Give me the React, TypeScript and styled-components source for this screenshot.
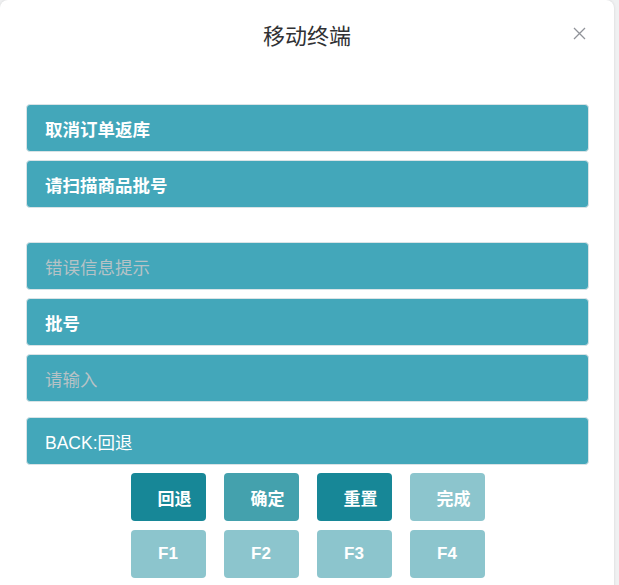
import React from 'react';
import styled, { createGlobalStyle } from 'styled-components';

const GlobalStyle = createGlobalStyle`
  html, body {
    margin: 0;
    padding: 0;
    background-color: #f0f1f2;
    font-family: "Liberation Sans", "Noto Sans CJK SC", sans-serif;
  }
`;

const Page = styled.div`
  width: 619px;
  height: 585px;
  overflow: hidden;
`;

const Dialog = styled.div`
  width: 614px;
  min-height: 600px;
  background-color: #ffffff;
  border-radius: 8px;
  box-shadow: 0 0 3px rgba(0, 0, 0, 0.12);
  display: flex;
  flex-direction: column;
`;

const Header = styled.div`
  position: relative;
  height: 74px;
  display: flex;
  justify-content: center;
  padding-top: 20px;
  box-sizing: border-box;
`;

const Title = styled.h2`
  margin: 0;
  font-size: 22px;
  line-height: 34px;
  font-weight: 400;
  color: #303133;
`;

const CloseButton = styled.button`
  position: absolute;
  top: 24px;
  right: 26px;
  width: 18px;
  height: 18px;
  padding: 0;
  border: none;
  background: transparent;
  display: flex;
  align-items: center;
  justify-content: center;
  cursor: pointer;
`;

const Body = styled.div`
  padding: 30px 25px 0 26px;
  display: flex;
  flex-direction: column;
`;

const Group = styled.div<{ $gap?: number }>`
  display: flex;
  flex-direction: column;
  gap: 8px;
  margin-top: ${props => props.$gap ?? 0}px;
`;

const Row = styled.div<{ $muted?: boolean; $light?: boolean }>`
  height: 48px;
  box-sizing: border-box;
  border: 1px solid #d9e3e6;
  border-radius: 4px;
  background-color: #43a7ba;
  display: flex;
  align-items: center;
  padding-left: 18px;
  font-size: 17.5px;
  font-weight: ${props => (props.$muted || props.$light ? 400 : 700)};
  color: ${props => (props.$muted ? '#b6c2c6' : '#ffffff')};
`;

const ButtonGrid = styled.div`
  margin-top: 8px;
  align-self: center;
  display: grid;
  grid-template-columns: repeat(4, 75px);
  column-gap: 18px;
  row-gap: 9px;
`;

const KeyButton = styled.button<{ $tone: 'dark' | 'mid' | 'light'; $centered?: boolean }>`
  height: 48px;
  border: none;
  border-radius: 4px;
  background-color: ${props =>
    props.$tone === 'dark' ? '#178797' : props.$tone === 'mid' ? '#44a1ad' : '#8cc5cd'};
  color: #ffffff;
  font-family: "Liberation Sans", "Noto Sans CJK SC", sans-serif;
  font-size: 17px;
  font-weight: 700;
  text-align: ${props => (props.$centered ? 'center' : 'left')};
  padding: 0 0 0 ${props => (props.$centered ? 0 : 27)}px;
  cursor: pointer;
`;

const actions: { label: string; tone: 'dark' | 'mid' | 'light' }[] = [
  { label: '回退', tone: 'dark' },
  { label: '确定', tone: 'mid' },
  { label: '重置', tone: 'dark' },
  { label: '完成', tone: 'light' },
];

const fkeys = ['F1', 'F2', 'F3', 'F4'];

const App: React.FC = () => {
  return (
    <>
      <GlobalStyle />
      <Page>
        <Dialog>
          <Header>
            <Title>移动终端</Title>
            <CloseButton aria-label="close">
              <svg width="13" height="13" viewBox="0 0 13 13">
                <path d="M1 1 L12 12 M12 1 L1 12" stroke="#909399" strokeWidth="1.3" fill="none" />
              </svg>
            </CloseButton>
          </Header>
          <Body>
            <Group>
              <Row>取消订单返库</Row>
              <Row>请扫描商品批号</Row>
            </Group>
            <Group $gap={34}>
              <Row $muted>错误信息提示</Row>
              <Row>批号</Row>
              <Row $muted>请输入</Row>
            </Group>
            <Group $gap={15}>
              <Row $light>BACK:回退</Row>
            </Group>
            <ButtonGrid>
              {actions.map(a => (
                <KeyButton key={a.label} $tone={a.tone}>
                  {a.label}
                </KeyButton>
              ))}
              {fkeys.map(k => (
                <KeyButton key={k} $tone="light" $centered>
                  {k}
                </KeyButton>
              ))}
            </ButtonGrid>
          </Body>
        </Dialog>
      </Page>
    </>
  );
};

export default App;
